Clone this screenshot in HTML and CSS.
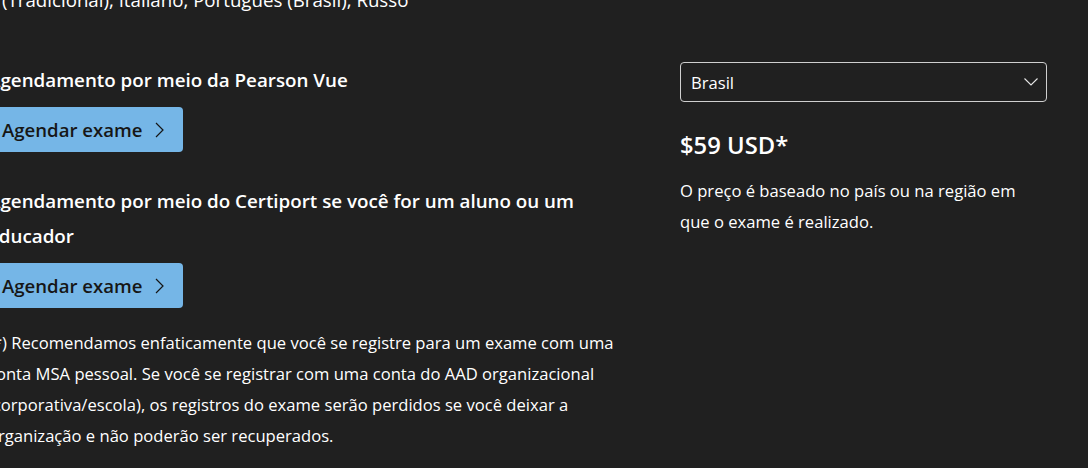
FILE: index.html
```html
<!DOCTYPE html>
<html lang="pt-BR">
<head>
<meta charset="utf-8">
<link rel="stylesheet" href="styles.css">
</head>
<body>
<main class="page">
  <p class="langs">(Tradicional), Italiano, Português (Brasil), Russo</p>
  <section class="grid">
    <div class="left">
      <h3 class="heading first">Agendamento por meio da Pearson Vue</h3>
      <a class="btn" href="#">Agendar exame
        <svg class="chev" width="9" height="16" viewBox="0 0 9 16"><path d="M1 1 L8 8 L1 15" fill="none" stroke="#161616" stroke-width="1.2"/></svg>
      </a>
      <h3 class="heading second">Agendamento por meio do Certiport se você for um aluno ou um educador</h3>
      <a class="btn" href="#">Agendar exame
        <svg class="chev" width="9" height="16" viewBox="0 0 9 16"><path d="M1 1 L8 8 L1 15" fill="none" stroke="#161616" stroke-width="1.2"/></svg>
      </a>
      <p class="note">(*) Recomendamos enfaticamente que você se registre para um exame com uma conta MSA pessoal. Se você se registrar com uma conta do AAD organizacional (corporativa/escola), os registros do exame serão perdidos se você deixar a organização e não poderão ser recuperados.</p>
    </div>
    <div class="right">
      <div class="select">
        <span>Brasil</span>
        <svg width="14" height="8" viewBox="0 0 14 8"><path d="M0.5 0.5 L7 7 L13.5 0.5" fill="none" stroke="#e6e6e6" stroke-width="1.1"/></svg>
      </div>
      <div class="price">$59 USD*</div>
      <p class="price-note">O preço é baseado no país ou na região em que o exame é realizado.</p>
    </div>
  </section>
</main>
</body>
</html>
```
FILE: styles.css
```css
html, body {
  margin: 0;
  background: #202020;
  color: #ffffff;
  font-family: "Open Sans", "Noto Sans", sans-serif;
  overflow: hidden;
}
.page {
  margin-top: -16px;
  margin-left: -12px;
}
p { margin: 0; }
.langs {
  font-size: 18.7px;
  line-height: 31px;
  padding-left: 14px;
}
.grid {
  display: grid;
  grid-template-columns: 640px 367px;
  column-gap: 52px;
  margin-top: 47px;
  align-items: start;
}
.heading {
  margin: 0;
  font-size: 18.8px;
  font-weight: 600;
  line-height: 35px;
}
.heading.first { margin-top: 1px; }
.heading.second { margin-top: 32px; }
.btn {
  display: inline-flex;
  align-items: center;
  gap: 12px;
  height: 45px;
  box-sizing: border-box;
  padding: 0 19px 0 14px;
  margin-top: 9px;
  background: #75b6e7;
  color: #161616;
  text-decoration: none;
  border-radius: 4px;
  font-size: 18.6px;
  font-weight: 600;
}
.chev { display: block; }
.note {
  margin-top: 19px;
  font-size: 16.6px;
  line-height: 31px;
  width: 640px;
}
.select {
  display: flex;
  align-items: center;
  justify-content: space-between;
  height: 40px;
  box-sizing: border-box;
  border: 1px solid #cfcfcf;
  border-radius: 4px;
  padding: 0 8px 0 10px;
  font-size: 16.6px;
}
.price {
  margin-top: 27px;
  font-size: 23.8px;
  font-weight: 600;
  line-height: 32px;
}
.price-note {
  margin-top: 14px;
  font-size: 16.6px;
  line-height: 31px;
}
```
